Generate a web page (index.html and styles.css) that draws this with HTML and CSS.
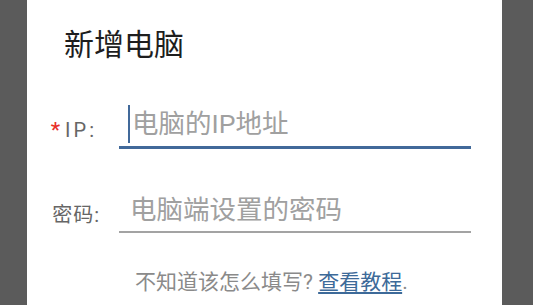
FILE: index.html
```html
<!DOCTYPE html>
<html lang="zh">
<head>
<meta charset="utf-8">
<link rel="stylesheet" href="styles.css">
</head>
<body>
<div class="dialog">
  <div class="title">新增电脑</div>
  <div class="form">
    <div class="row row-ip">
      <div class="label"><span class="req">*</span>IP:</div>
      <div class="field field-active">
        <span class="caret"></span><span class="ph">电脑的IP地址</span>
      </div>
    </div>
    <div class="row row-pw">
      <div class="label">密码:</div>
      <div class="field">
        <span class="ph ph-pw">电脑端设置的密码</span>
      </div>
    </div>
  </div>
  <div class="help">不知道该怎么填写? <a class="link" href="#">查看教程</a>.</div>
</div>
</body>
</html>
```
FILE: styles.css
```css
html, body {
  margin: 0;
  padding: 0;
  height: 100%;
  background: #5b5b5b;
  overflow: hidden;
}
body {
  font-family: Roboto, "Noto Sans CJK SC", sans-serif;
}
.dialog {
  margin-left: 27px;
  width: 475px;
  height: 100%;
  background: #ffffff;
  box-sizing: border-box;
  padding-top: 30px;
}
.title {
  padding-left: 37px;
  font-size: 30px;
  line-height: 30px;
  color: #1e1e1e;
}
.form {
  margin-top: 45px;
  display: flex;
  flex-direction: column;
  gap: 42px;
}
.row {
  display: flex;
  align-items: center;
}
.label {
  width: 73px;
  text-align: right;
  font-size: 20px;
  color: #666666;
  letter-spacing: 1px;
  flex: none;
}
.row-ip .label {
  padding-top: 6px;
  padding-right: 3px;
  box-sizing: border-box;
  letter-spacing: 3px;
}
.row-pw .label {
  padding-top: 2px;
}
.req {
  color: #e8302a;
  font-size: 21px;
  font-weight: 500;
  margin-right: 5px;
  letter-spacing: 0;
}
.field {
  margin-left: 19px;
  width: 352px;
  height: 38px;
  display: flex;
  align-items: center;
  border-bottom: 2px solid #a3a3a3;
  padding-bottom: 2px;
}
.field-active {
  border-bottom: 3px solid #41699a;
  padding-bottom: 3px;
}
.caret {
  width: 2px;
  height: 38px;
  background: #41699a;
  margin-left: 9px;
  flex: none;
}
.ph {
  font-size: 26.5px;
  line-height: 38px;
  color: #a0a0a0;
  margin-left: 2px;
}
.ph-pw {
  margin-left: 11px;
}
.help {
  margin-top: 34px;
  padding-left: 108px;
  font-size: 21px;
  line-height: 30px;
  color: #8a8a8a;
}
.link {
  color: #3d6a99;
  text-decoration: underline;
  text-underline-offset: 3px;
}
```
